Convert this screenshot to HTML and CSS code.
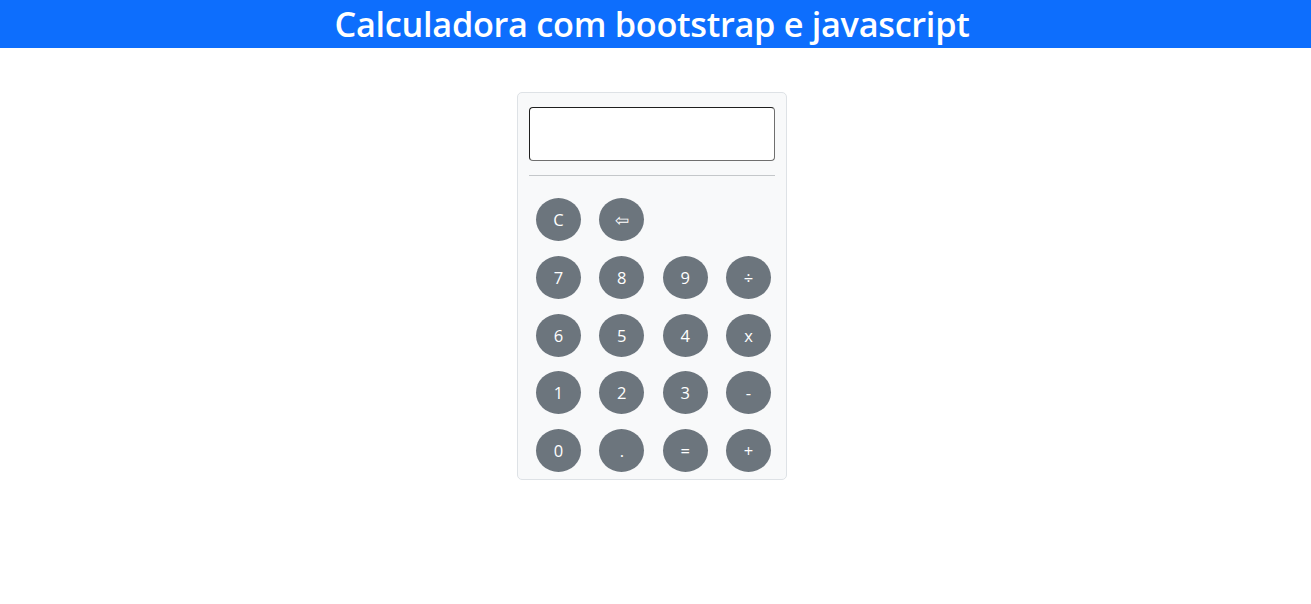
FILE: index.html
```html
<!DOCTYPE html>
<html lang="pt-BR">
<head>
<meta charset="utf-8">
<title>Calculadora</title>
<link rel="stylesheet" href="styles.css">
</head>
<body>
<header class="topbar">
  <h1 class="title">Calculadora com bootstrap e javascript</h1>
</header>
<main class="page">
  <div class="calc">
    <input class="display" type="text">
    <hr class="divider">
    <div class="keys">
      <button class="key">C</button>
      <button class="key">&#8678;</button>
      <span class="blank"></span>
      <span class="blank"></span>
      <button class="key">7</button>
      <button class="key">8</button>
      <button class="key">9</button>
      <button class="key">÷</button>
      <button class="key">6</button>
      <button class="key">5</button>
      <button class="key">4</button>
      <button class="key">x</button>
      <button class="key">1</button>
      <button class="key">2</button>
      <button class="key">3</button>
      <button class="key">-</button>
      <button class="key">0</button>
      <button class="key">.</button>
      <button class="key">=</button>
      <button class="key">+</button>
    </div>
  </div>
</main>
</body>
</html>
```
FILE: styles.css
```css
* { box-sizing: border-box; }
body {
  margin: 0;
  font-family: "Open Sans", "Noto Sans", sans-serif;
  background: #fff;
  color: #212529;
}
.topbar {
  background: #0d6efd;
  height: 48px;
  display: flex;
  justify-content: center;
  align-items: center;
  padding-right: 7px;
}
.title {
  margin: 0;
  color: #fff;
  font-size: 34.3px;
  font-weight: 600;
  line-height: 48px;
  letter-spacing: -0.3px;
}
.page {
  display: flex;
  justify-content: center;
  align-items: flex-start;
  padding-top: 44px;
  padding-right: 7px;
}
.calc {
  width: 270px;
  background: #f8f9fa;
  border: 1px solid #dee2e6;
  border-radius: 5px;
  padding: 14px 11px 7px 11px;
  display: flex;
  flex-direction: column;
}
.display {
  flex-shrink: 0;
  width: 246px;
  height: 54px;
  border: 1px solid;
  border-color: #1f1f1f #6f6f6f #6f6f6f #1f1f1f;
  border-radius: 4px;
  background: #fff;
  margin: 0;
}
.divider {
  flex-shrink: 0;
  margin: 14px 0 0 0;
  border: 0;
  border-top: 1px solid #c4c7ca;
  height: 0;
  opacity: 1;
}
.keys {
  display: grid;
  grid-template-columns: repeat(4, 45px);
  grid-auto-rows: 43px;
  column-gap: 18.33px;
  row-gap: 14.75px;
  padding: 22px 0 0 7px;
}
.key {
  width: 45px;
  height: 43px;
  border: 0;
  border-radius: 50%;
  background: #6c757d;
  color: #fff;
  font-family: "Open Sans", "Noto Sans", sans-serif;
  font-size: 16.5px;
  padding: 0;
  display: flex;
  align-items: center;
  justify-content: center;
}
.blank { height: 43px; }
```
